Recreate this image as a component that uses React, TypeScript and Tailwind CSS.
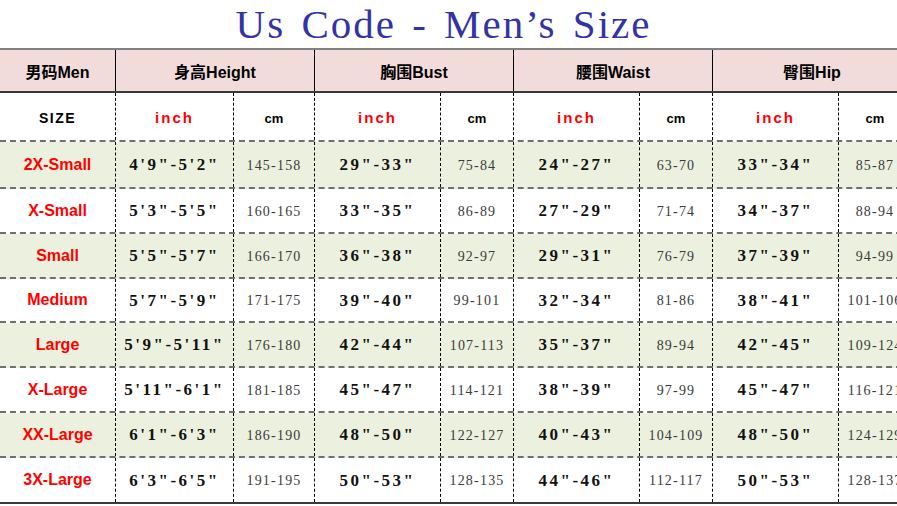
const groups = ["身高Height", "胸围Bust", "腰围Waist", "臀围Hip"];

const rows = [
  ["2X-Small", `4'9"-5'2"`, "145-158", `29"-33"`, "75-84", `24"-27"`, "63-70", `33"-34"`, "85-87"],
  ["X-Small", `5'3"-5'5"`, "160-165", `33"-35"`, "86-89", `27"-29"`, "71-74", `34"-37"`, "88-94"],
  ["Small", `5'5"-5'7"`, "166-170", `36"-38"`, "92-97", `29"-31"`, "76-79", `37"-39"`, "94-99"],
  ["Medium", `5'7"-5'9"`, "171-175", `39"-40"`, "99-101", `32"-34"`, "81-86", `38"-41"`, "101-106"],
  ["Large", `5'9"-5'11"`, "176-180", `42"-44"`, "107-113", `35"-37"`, "89-94", `42"-45"`, "109-124"],
  ["X-Large", `5'11"-6'1"`, "181-185", `45"-47"`, "114-121", `38"-39"`, "97-99", `45"-47"`, "116-121"],
  ["XX-Large", `6'1"-6'3"`, "186-190", `48"-50"`, "122-127", `40"-43"`, "104-109", `48"-50"`, "124-129"],
  ["3X-Large", `6'3"-6'5"`, "191-195", `50"-53"`, "128-135", `44"-46"`, "112-117", `50"-53"`, "128-137"],
];

// row heights read off the screenshot (incl. the 2px bottom rule)
const heights = ["h-[47px]", "h-[45px]", "h-[45px]", "h-[44px]", "h-[45px]", "h-[45px]", "h-[45px]", "h-[46px]"];

const grid =
  "grid grid-cols-[116px_118px_81px_126px_73px_126px_73px_126px_73px] w-[912px]";

export default function App() {
  return (
    <div className="w-full h-[506px] overflow-hidden bg-white font-['Liberation_Sans','Noto_Sans_CJK_SC',sans-serif]">
      <div className="h-12 pr-[10px] text-center">
        <h1 className="font-['Liberation_Serif',serif] text-[41px] leading-[48px] tracking-[2px] [word-spacing:4px] text-[#3333a6]">
          Us Code - Men’s Size
        </h1>
      </div>

      <div className="border-t-2 border-[#808080]">
        {/* group header */}
        <div className={`${grid} h-[43px] bg-[#f2dcdb] border-b-2 border-[#3a3a3a]`}>
          <div className="flex items-center justify-center pt-1 border-r border-black text-[16px] font-bold text-black">
            男码Men
          </div>
          {groups.map((g) => (
            <div
              key={g}
              className="col-span-2 flex items-center justify-center pt-1 border-r border-black text-[16px] font-bold text-black"
            >
              {g}
            </div>
          ))}
        </div>

        {/* units row */}
        <div className={`${grid} h-[49px] bg-white border-b-2 border-dashed border-[#707070]`}>
          <div className="flex items-center justify-center pt-1 border-r border-dashed border-black text-[14px] font-bold tracking-[1.5px] text-black">
            SIZE
          </div>
          {groups.map((g) => (
            <div key={g} className="contents">
              <div className="flex items-center justify-center pt-1 border-r border-dashed border-black text-[15px] font-bold tracking-[2px] text-[#ff0000]">
                inch
              </div>
              <div className="flex items-center justify-center pt-1 border-r border-dashed border-black text-[13px] font-bold text-black">
                cm
              </div>
            </div>
          ))}
        </div>

        {/* data */}
        {rows.map((r, i) => (
          <div
            key={r[0]}
            className={`${grid} ${heights[i]} border-b-2 ${
              i === rows.length - 1 ? "border-solid border-[#3a3a3a]" : "border-dashed border-[#707070]"
            } ${i % 2 === 0 ? "bg-[#ebf1de]" : "bg-white"}`}
          >
            <div className="flex items-center justify-center border-r border-dashed border-black text-[16px] font-bold text-[#ff0000]">
              {r[0]}
            </div>
            {r.slice(1).map((v, j) =>
              j % 2 === 0 ? (
                <div
                  key={j}
                  className="flex items-center justify-center pt-px border-r border-dashed border-black font-['Liberation_Serif',serif] text-[17px] font-bold tracking-[2.5px] text-[#111]"
                >
                  {v}
                </div>
              ) : (
                <div
                  key={j}
                  className="flex items-center justify-center pt-px border-r border-dashed border-black font-['Liberation_Serif',serif] text-[14px] tracking-[1.2px] text-[#3a3a3a]"
                >
                  {v}
                </div>
              )
            )}
          </div>
        ))}
      </div>
    </div>
  );
}
